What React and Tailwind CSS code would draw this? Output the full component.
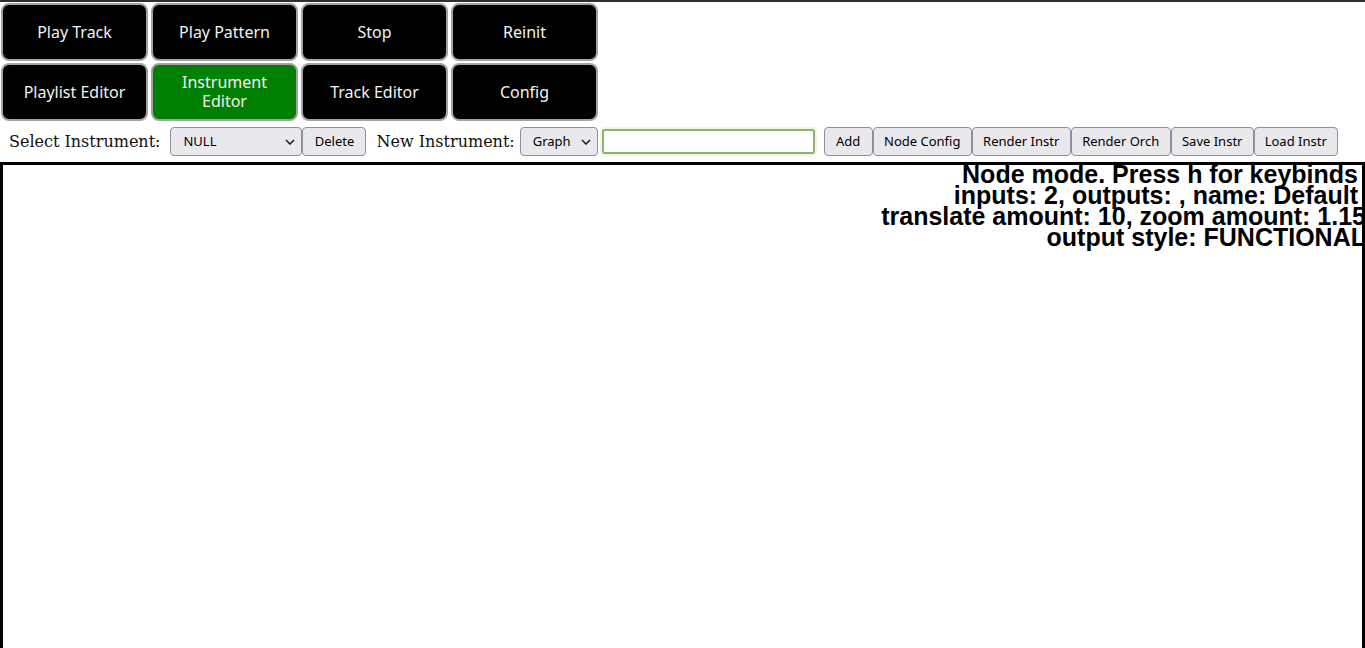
import React, { useState } from "react";

const bigButtons = [
  ["Play Track", false],
  ["Play Pattern", false],
  ["Stop", false],
  ["Reinit", false],
  ["Playlist Editor", false],
  ["Instrument Editor", true],
  ["Track Editor", false],
  ["Config", false],
];

const BigButton = ({ label, active }) => (
  <button
    className={`h-[58px] rounded-lg border-2 border-[#a3a3a3] px-[10px] text-[16px] leading-[19px] text-[#f2f2f2] ${
      active ? "bg-[#008000]" : "bg-black"
    }`}
  >
    {label}
  </button>
);

const SmallButton = ({ label, w }) => (
  <button
    className={`h-[29px] rounded-[4px] border border-[#8f8f9d] bg-[#e9e9ed] text-[13px] text-black ${w}`}
  >
    {label}
  </button>
);

const Chevron = () => (
  <svg width="10" height="6" viewBox="0 0 10 6" className="shrink-0">
    <path d="M1 1l4 4 4-4" fill="none" stroke="#222" strokeWidth="1.6" />
  </svg>
);

const FakeSelect = ({ value, w }) => (
  <div
    className={`flex h-[29px] items-center justify-between rounded-[4px] border border-[#8f8f9d] bg-[#e9e9ed] pl-[12px] pr-[6px] text-[13px] text-black ${w}`}
  >
    <span>{value}</span>
    <Chevron />
  </div>
);

export default function App() {
  const [name, setName] = useState("");

  return (
    <div className="h-[648px] w-[1365px] overflow-hidden bg-white font-['Noto_Sans',sans-serif]">
      <div className="h-[2px] bg-[#2f2f2f]" />

      <div className="grid w-[600px] grid-cols-[147px_147px_147px_147px] gap-x-[3px] gap-y-[2px] pl-[1px] pt-[1px]">
        {bigButtons.map(([label, active]) => (
          <BigButton key={label} label={label} active={active} />
        ))}
      </div>

      <div className="mt-[6px] flex h-[29px] items-center pl-[9px]">
        <span className="mr-[10px] font-['DejaVu_Serif',serif] text-[16px] text-[#111]">
          Select Instrument:
        </span>
        <FakeSelect value="NULL" w="w-[132px]" />
        <SmallButton label="Delete" w="w-[64px]" />
        <span className="ml-[10px] mr-[5px] font-['DejaVu_Serif',serif] text-[16px] text-[#111]">
          New Instrument:
        </span>
        <FakeSelect value="Graph" w="w-[78px]" />
        <input
          value={name}
          onChange={(e) => setName(e.target.value)}
          className="ml-[4px] h-[25px] w-[213px] rounded-[3px] border-2 border-[#8fb070] bg-white px-1 text-[13px] shadow-[0_0_0_2px_#eef6e6] outline-none"
        />
        <div className="ml-[9px] flex">
          <SmallButton label="Add" w="w-[49px]" />
          <SmallButton label="Node Config" w="w-[99px]" />
          <SmallButton label="Render Instr" w="w-[99px]" />
          <SmallButton label="Render Orch" w="w-[100px]" />
          <SmallButton label="Save Instr" w="w-[83px]" />
          <SmallButton label="Load Instr" w="w-[84px]" />
        </div>
      </div>

      <div className="mt-[6px] h-[500px] overflow-hidden border-[3px] border-black bg-white">
        <div className="-mt-[1px] flex flex-col items-end font-['Liberation_Sans',sans-serif] text-[25px] font-bold leading-[21px] text-black">
          <span className="mr-[4px] whitespace-nowrap">Node mode. Press h for keybinds</span>
          <span className="mr-[4px] whitespace-nowrap">inputs: 2, outputs: , name: Default</span>
          <span className="mr-[-4px] whitespace-nowrap">translate amount: 10, zoom amount: 1.15</span>
          <span className="mr-[-4px] whitespace-nowrap">output style: FUNCTIONAL</span>
        </div>
      </div>
    </div>
  );
}
